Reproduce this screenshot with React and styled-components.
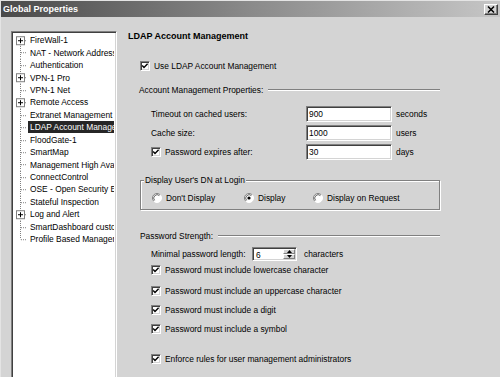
import React from 'react';
import styled, { createGlobalStyle } from 'styled-components';

const GlobalStyle = createGlobalStyle`
  html, body {
    margin: 0;
    padding: 0;
    background: #d4d4d4;
  }
  body {
    font-family: "Liberation Sans", Arial, sans-serif;
    font-size: 8.4px;
    color: #000;
  }
`;

const Window = styled.div`
  width: 500px;
  height: 377px;
  box-sizing: border-box;
  border-top: 1px solid #e4e4e4;
  border-left: 1px solid #e4e4e4;
  background: #d4d4d4;
  overflow: hidden;
  display: flex;
  flex-direction: column;
`;

const TitleBar = styled.div`
  height: 16px;
  flex: none;
  display: flex;
  align-items: center;
  justify-content: space-between;
  padding: 0 2px 0 2px;
  background: linear-gradient(to right, #4a4a4a, #8a8a8a 50%, #c6c6c6);
  color: #fff;
  font-weight: bold;
  font-size: 9px;
`;

const CloseButton = styled.div`
  width: 14px;
  height: 11px;
  box-sizing: border-box;
  display: flex;
  align-items: center;
  justify-content: center;
  background: #d4d4d4;
  border: 1px solid;
  border-color: #fff #404040 #404040 #fff;
  box-shadow: inset -1px -1px 0 #808080;
`;

const Body = styled.div`
  flex: 1;
  display: flex;
  align-items: flex-start;
  padding-left: 10px;
  min-height: 0;
`;

const Tree = styled.div`
  width: 106px;
  flex: none;
  margin-top: 14px;
  height: 400px;
  box-sizing: border-box;
  background: #fff;
  border: 1px solid;
  border-color: #808080 #fff #fff #808080;
  box-shadow: inset 1px 1px 0 #404040, inset -1px -1px 0 #d4d4d4;
  padding: 2px 2px 0 1px;
  overflow: hidden;
`;

const TreeRow = styled.div`
  height: 12.45px;
  display: flex;
  align-items: center;
  white-space: nowrap;
`;

const TreeLabel = styled.span`
  flex: 1;
  min-width: 0;
  overflow: hidden;
  height: 12px;
  line-height: 12px;
  padding-left: 2px;
  background: ${p => (p.$selected ? '#262626' : 'transparent')};
  color: ${p => (p.$selected ? '#fff' : '#000')};
`;

const Content = styled.div`
  flex: none;
  width: 312px;
  margin-left: 11px;
  padding-top: 13px;
  display: flex;
  flex-direction: column;
  & > * {
    flex-shrink: 0;
  }
`;

const Heading = styled.div`
  height: 12px;
  line-height: 12px;
  font-weight: bold;
  font-size: 9px;
`;

const Line = styled.div`
  height: 12px;
  display: flex;
  align-items: center;
  margin-top: ${p => p.$top || 0}px;
  margin-left: ${p => p.$indent || 0}px;
`;

const Separator = styled.div`
  flex: 1;
  height: 0;
  margin-left: 5px;
  border-top: 1px solid #808080;
  border-bottom: 1px solid #fff;
`;

const CheckWrap = styled.span`
  display: inline-flex;
  align-items: center;
  gap: 4px;
`;

const Box = styled.span`
  width: 10px;
  height: 10px;
  box-sizing: border-box;
  flex: none;
  display: inline-flex;
  background: #fff;
  border: 1px solid;
  border-color: #808080 #fff #fff #808080;
  box-shadow: inset 1px 1px 0 #404040, inset -1px -1px 0 #d4d4d4;
`;

const FieldRow = styled.div`
  height: ${p => p.$h || 16}px;
  display: flex;
  align-items: center;
  margin-left: 23px;
  margin-top: ${p => p.$top || 0}px;
`;

const FieldLabel = styled.div`
  width: ${p => p.$w || 155}px;
  flex: none;
`;

const TextField = styled.div`
  width: 86px;
  height: 16px;
  box-sizing: border-box;
  flex: none;
  background: #fff;
  border: 1px solid;
  border-color: #808080 #fff #fff #808080;
  box-shadow: inset 1px 1px 0 #404040, inset -1px -1px 0 #d4d4d4;
  padding: 0 2px;
  line-height: 14px;
`;

const Unit = styled.span`
  margin-left: ${p => p.$gap || 4}px;
`;

const GroupBox = styled.div`
  margin: 20px 0 0 12px;
  width: 300px;
  height: 30px;
  box-sizing: border-box;
  border: 1px solid #808080;
  box-shadow: inset 1px 1px 0 #fff, 1px 1px 0 #fff;
`;

const Legend = styled.div`
  width: fit-content;
  margin: -7px 0 0 3px;
  padding: 0 1px;
  height: 12px;
  line-height: 12px;
  background: #d4d4d4;
`;

const RadioRow = styled.div`
  display: flex;
  align-items: center;
  height: 12px;
  margin: 6px 0 0 11px;
`;

const RadioOption = styled.span`
  width: ${p => p.$w}px;
  display: inline-flex;
  align-items: center;
  gap: 4px;
`;

const Spinner = styled.div`
  width: 45px;
  height: 14px;
  box-sizing: border-box;
  flex: none;
  display: flex;
  background: #fff;
  border: 1px solid;
  border-color: #808080 #fff #fff #808080;
  box-shadow: inset 1px 1px 0 #404040, inset -1px -1px 0 #d4d4d4;
  padding: 1px;
`;

const SpinValue = styled.span`
  flex: 1;
  padding-left: 2px;
  line-height: 12px;
`;

const SpinButtons = styled.div`
  width: 12px;
  display: flex;
  flex-direction: column;
`;

const SpinButton = styled.div`
  flex: 1;
  box-sizing: border-box;
  background: #d4d4d4;
  border: 1px solid;
  border-color: #fff #808080 #808080 #fff;
  display: flex;
  align-items: center;
  justify-content: center;
`;

function Check({ children }) {
  return (
    <CheckWrap>
      <Box>
        <svg width="8" height="8" viewBox="0 0 8 8">
          <path d="M1.2 3.6 L3 5.5 L6.6 1.8" fill="none" stroke="#000" strokeWidth="1.4" />
        </svg>
      </Box>
      {children}
    </CheckWrap>
  );
}

function Radio({ checked }) {
  return (
    <svg width="10" height="10" viewBox="0 0 10 10" style={{ flex: 'none' }}>
      <circle cx="5" cy="5" r="4.5" fill="#fff" />
      <path d="M1.8 8.2 A4.5 4.5 0 0 1 8.2 1.8" fill="none" stroke="#808080" strokeWidth="1" />
      <path d="M2.6 7.4 A3.4 3.4 0 0 1 7.4 2.6" fill="none" stroke="#404040" strokeWidth="0.8" />
      <path d="M8.2 1.8 A4.5 4.5 0 0 1 1.8 8.2" fill="none" stroke="#fff" strokeWidth="1" />
      {checked && <circle cx="5" cy="5" r="1.6" fill="#000" />}
    </svg>
  );
}

function Connector({ plus, first, last }) {
  const h = 12.45;
  const m = h / 2;
  return (
    <svg width="15" height={h} style={{ flex: 'none' }}>
      <line x1="7.5" y1={first ? m : 0} x2="7.5" y2={last ? m : h}
        stroke="#808080" strokeDasharray="1 1" />
      <line x1="8" y1={m + 0.5} x2="14" y2={m + 0.5} stroke="#808080" strokeDasharray="1 1" />
      {plus && (
        <g>
          <rect x="3.5" y={m - 3.5} width="8" height="8" fill="#fff" stroke="#808080" />
          <line x1="5" y1={m + 0.5} x2="10" y2={m + 0.5} stroke="#000" />
          <line x1="7.5" y1={m - 2} x2="7.5" y2={m + 3} stroke="#000" />
        </g>
      )}
    </svg>
  );
}

const treeItems = [
  { label: 'FireWall-1', plus: true },
  { label: 'NAT - Network Address Translation' },
  { label: 'Authentication' },
  { label: 'VPN-1 Pro', plus: true },
  { label: 'VPN-1 Net' },
  { label: 'Remote Access', plus: true },
  { label: 'Extranet Management Interface' },
  { label: 'LDAP Account Management', selected: true },
  { label: 'FloodGate-1' },
  { label: 'SmartMap' },
  { label: 'Management High Availability' },
  { label: 'ConnectControl' },
  { label: 'OSE - Open Security Extension' },
  { label: 'Stateful Inspection' },
  { label: 'Log and Alert', plus: true },
  { label: 'SmartDashboard customization' },
  { label: 'Profile Based Management' },
];

const fields = [
  { label: 'Timeout on cached users:', value: '900', unit: 'seconds' },
  { label: 'Cache size:', value: '1000', unit: 'users' },
  { label: 'Password expires after:', value: '30', unit: 'days', check: true },
];

const rules = [
  { text: 'Password must include lowercase character', top: 3 },
  { text: 'Password must include an uppercase character', top: 9 },
  { text: 'Password must include a digit', top: 7 },
  { text: 'Password must include a symbol', top: 7 },
  { text: 'Enforce rules for user management administrators', top: 18 },
];

export default function App() {
  return (
    <>
      <GlobalStyle />
      <Window>
        <TitleBar>
          <span>Global Properties</span>
          <CloseButton>
            <svg width="8" height="7" viewBox="0 0 8 7">
              <path d="M1 0.5 L7 6.5 M7 0.5 L1 6.5" stroke="#000" strokeWidth="1.5" />
            </svg>
          </CloseButton>
        </TitleBar>
        <Body>
          <Tree>
            {treeItems.map((it, i) => (
              <TreeRow key={it.label}>
                <Connector plus={it.plus} first={i === 0} last={i === treeItems.length - 1} />
                <TreeLabel $selected={it.selected}>{it.label}</TreeLabel>
              </TreeRow>
            ))}
          </Tree>
          <Content>
            <Heading>LDAP Account Management</Heading>
            <Line $top={18} $indent={12}>
              <Check>Use LDAP Account Management</Check>
            </Line>
            <Line $top={12} $indent={11}>
              <span>Account Management Properties:</span>
              <Separator />
            </Line>
            {fields.map((f, i) => (
              <FieldRow key={f.label} $top={i === 0 ? 10 : 3}>
                <FieldLabel>{f.check ? <Check>{f.label}</Check> : f.label}</FieldLabel>
                <TextField>{f.value}</TextField>
                <Unit>{f.unit}</Unit>
              </FieldRow>
            ))}
            <GroupBox>
              <Legend>Display User's DN at Login</Legend>
              <RadioRow>
                <RadioOption $w={92}><Radio />Don't Display</RadioOption>
                <RadioOption $w={69}><Radio checked />Display</RadioOption>
                <RadioOption $w={120}><Radio />Display on Request</RadioOption>
              </RadioRow>
            </GroupBox>
            <Line $top={20} $indent={12}>
              <span>Password Strength:</span>
              <Separator />
            </Line>
            <FieldRow $top={5} $h={14}>
              <FieldLabel $w={101}>Minimal password length:</FieldLabel>
              <Spinner>
                <SpinValue>6</SpinValue>
                <SpinButtons>
                  <SpinButton>
                    <svg width="5" height="3"><path d="M0 3 L2.5 0 L5 3Z" fill="#000" /></svg>
                  </SpinButton>
                  <SpinButton>
                    <svg width="5" height="3"><path d="M0 0 L2.5 3 L5 0Z" fill="#000" /></svg>
                  </SpinButton>
                </SpinButtons>
              </Spinner>
              <Unit $gap={7}>characters</Unit>
            </FieldRow>
            {rules.map(r => (
              <Line key={r.text} $top={r.top} $indent={23}>
                <Check>{r.text}</Check>
              </Line>
            ))}
          </Content>
        </Body>
      </Window>
    </>
  );
}
